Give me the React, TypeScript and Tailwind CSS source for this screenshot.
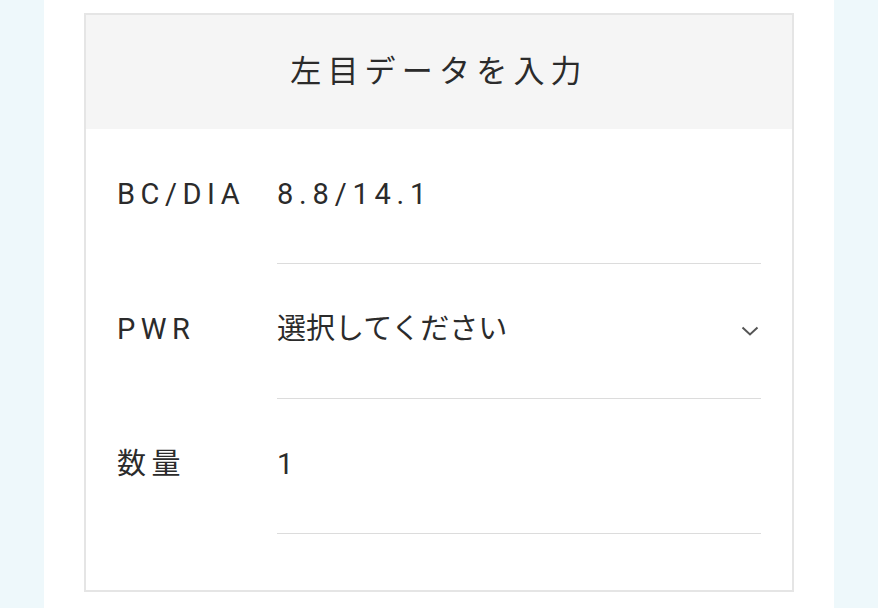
import { useState } from 'react';

const rows = [
  { id: 'bc', label: 'BC/DIA', kind: 'text', value: '8.8/14.1' },
  { id: 'pwr', label: 'PWR', kind: 'select', value: '選択してください' },
  { id: 'qty', label: '数量', kind: 'text', value: '1' },
];

function Chevron() {
  return (
    <svg width="18" height="10" viewBox="0 0 18 10" fill="none" className="shrink-0">
      <path d="M1.5 1.5 L9 8.5 L16.5 1.5" stroke="#555" strokeWidth="2" />
    </svg>
  );
}

export default function App() {
  const [pwr] = useState('選択してください');

  return (
    <div
      className="min-h-screen bg-[#eef8fb] text-[#2b2b2b]"
      style={{ fontFamily: 'Roboto, "Noto Sans CJK JP", sans-serif' }}
    >
      <div className="w-[790px] mx-auto bg-white min-h-screen px-[40px] pt-[13px]">
        <div className="border-2 border-[#e5e5e5]">
          <div className="h-[114px] bg-[#f5f5f5] flex items-center justify-center">
            <h2 className="text-[31px] tracking-[0.2em] font-normal">左目データを入力</h2>
          </div>

          <div className="px-[31px] pb-[56px]">
            {rows.map((row) => (
              <div key={row.id} className="flex items-center">
                <div className="w-[160px] shrink-0 text-[29px] tracking-[0.19em] pb-[3px]">{row.label}</div>
                <div className="flex-1 h-[135px] border-b border-[#dcdcdc] flex items-center justify-between pb-[3px]">
                  {row.kind === 'select' ? (
                    <>
                      <span className="text-[29px]">{pwr}</span>
                      <span className="pr-[2px] pt-[2px]">
                        <Chevron />
                      </span>
                    </>
                  ) : (
                    <span className="text-[29px] tracking-[0.2em]">{row.value}</span>
                  )}
                </div>
              </div>
            ))}
          </div>
        </div>
      </div>
    </div>
  );
}
